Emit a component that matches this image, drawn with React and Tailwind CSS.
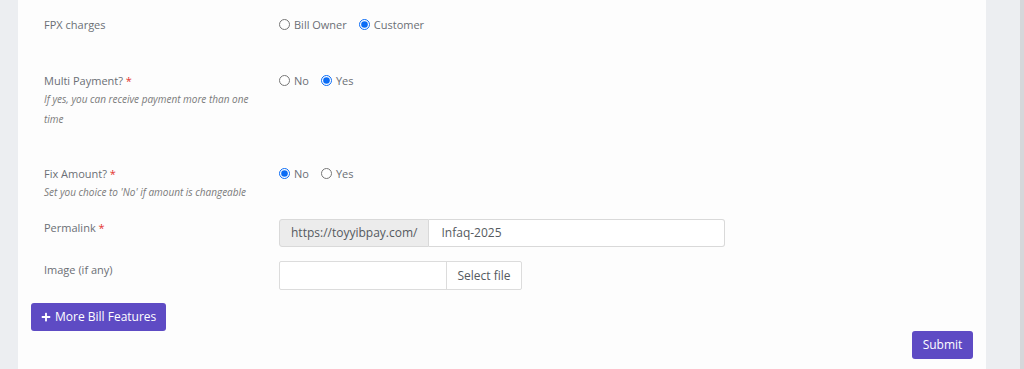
import React, { useState } from "react";
import { FaPlus } from "react-icons/fa";

const Req = () => <span className="text-[#e3342f]"> *</span>;

const Radio = ({ name, label, checked, onChange }) => (
  <label className="flex items-center gap-[4px] cursor-pointer">
    <input
      type="radio"
      name={name}
      checked={checked}
      onChange={onChange}
      className="m-0 w-[11px] h-[11px] accent-[#0b6cf5]"
    />
    <span>{label}</span>
  </label>
);

const RadioGroup = ({ name, options, value, setValue }) => (
  <div className="flex items-center gap-[12px] text-[11px] leading-[17px] text-[#6b6f75]">
    {options.map((opt) => (
      <Radio key={opt} name={name} label={opt} checked={value === opt} onChange={() => setValue(opt)} />
    ))}
  </div>
);

const Row = ({ label, help, children, className = "" }) => (
  <div className={`flex pl-[13px] ${className}`}>
    <div className="w-[235px] shrink-0">
      <div className="text-[11px] leading-[17px] text-[#6b6f75]">{label}</div>
      {help && <div className="text-[10px] leading-[20px] italic text-[#7a7a7a] pr-[20px]">{help}</div>}
    </div>
    <div className="flex-1">{children}</div>
  </div>
);

export default function App() {
  const [fpx, setFpx] = useState("Customer");
  const [multi, setMulti] = useState("Yes");
  const [fix, setFix] = useState("No");
  const [permalink, setPermalink] = useState("Infaq-2025");

  return (
    <div className="h-[369px] overflow-hidden bg-[#eceef1] flex font-['Open_Sans',sans-serif]">
      <div className="w-[18px] shrink-0" />
      <div className="w-[968px] shrink-0 bg-[#fdfdfd] px-[13px] pt-[16px]">
        <Row label="FPX charges">
          <RadioGroup name="fpx" options={["Bill Owner", "Customer"]} value={fpx} setValue={setFpx} />
        </Row>

        <Row
          className="mt-[39px]"
          label={<>Multi Payment?<Req /></>}
          help="If yes, you can receive payment more than one time"
        >
          <RadioGroup name="multi" options={["No", "Yes"]} value={multi} setValue={setMulti} />
        </Row>

        <Row
          className="mt-[36px]"
          label={<>Fix Amount?<Req /></>}
          help="Set you choice to 'No' if amount is changeable"
        >
          <RadioGroup name="fix" options={["No", "Yes"]} value={fix} setValue={setFix} />
        </Row>

        <Row className="mt-[17px]" label={<>Permalink<Req /></>}>
          <div className="flex w-[446px] h-[28px] text-[12px] text-[#555a60]">
            <span className="flex items-center px-[11px] bg-[#ececec] border border-[#d9d9d9] rounded-l-[3px]">
              https://toyyibpay.com/
            </span>
            <input
              value={permalink}
              onChange={(e) => setPermalink(e.target.value)}
              className="flex-1 min-w-0 px-[12px] bg-white border border-l-0 border-[#d9d9d9] rounded-r-[3px] outline-none text-[#555a60]"
            />
          </div>
        </Row>

        <Row className="mt-[14px]" label="Image (if any)">
          <label className="flex w-[243px] h-[29px] text-[12px] text-[#555a60] border border-[#dcdcdc] rounded-[2px] bg-white cursor-pointer">
            <span className="flex-1" />
            <span className="flex items-center w-[75px] justify-center border-l border-[#dcdcdc]">Select file</span>
            <input type="file" className="hidden" />
          </label>
        </Row>

        <button className="mt-[13px] flex items-center gap-[4px] h-[28px] px-[10px] rounded-[3px] bg-[#5e4bc4] text-white text-[12px]">
          <FaPlus className="w-[10px] h-[10px]" />
          More Bill Features
        </button>

        <div className="flex justify-end">
          <button className="h-[28px] w-[61px] rounded-[3px] bg-[#5e4bc4] text-white text-[12px]">Submit</button>
        </div>
      </div>
      <div className="flex-1 border-r-[4px] border-[#d6d7da]" />
    </div>
  );
}
